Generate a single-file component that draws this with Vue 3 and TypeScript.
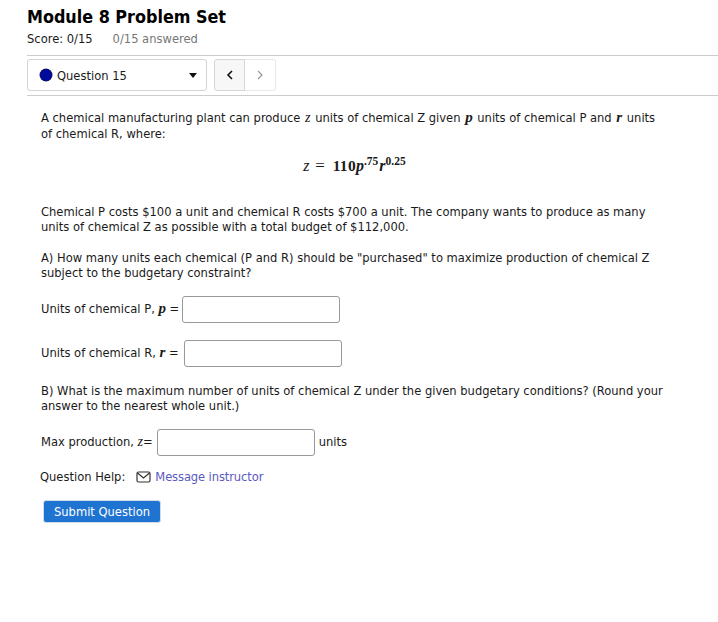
<script setup lang="ts">
const title = 'Module 8 Problem Set'
</script>

<template>
  <main class="page">
    <h1 class="title">{{ title }}</h1>
    <div class="score"><span>Score: 0/15</span><span class="answered">0/15 answered</span></div>
    <nav class="bar">
      <div class="select">
        <span class="dot"></span>
        <span class="qname">Question 15</span>
        <span class="caret"></span>
      </div>
      <div class="pager">
        <button class="pg prev" aria-label="Previous">
          <svg width="8" height="10" viewBox="0 0 8 10"><path d="M6 1 2 5l4 4" fill="none" stroke="#111" stroke-width="1.6"/></svg>
        </button>
        <button class="pg next" aria-label="Next">
          <svg width="8" height="10" viewBox="0 0 8 10"><path d="M2 1l4 4-4 4" fill="none" stroke="#999" stroke-width="1.2"/></svg>
        </button>
      </div>
    </nav>
    <section class="question">
      <p class="p1">A chemical manufacturing plant can produce <i class="mv">z</i> units of chemical Z given <i class="mb">p</i> units of chemical P and <i class="mb">r</i> units<br />of chemical R, where:</p>
      <div class="formula"><i class="mv big">z</i> <span class="eq">=</span> <b>110</b><i class="mb big">p</i><sup>.75</sup><i class="mb big">r</i><sup>0.25</sup></div>
      <p class="p2">Chemical P costs $100 a unit and chemical R costs $700 a unit. The company wants to produce as many units of chemical Z as possible with a total budget of $112,000.</p>
      <p class="p3">A) How many units each chemical (P and R) should be "purchased" to maximize production of chemical Z subject to the budgetary constraint?</p>
      <div class="field f1"><span class="lab">Units of chemical P, <i class="mb">p</i> =</span><input class="inp" type="text" /></div>
      <div class="field f2"><span class="lab">Units of chemical R, <i class="mb">r</i> =</span><input class="inp" type="text" /></div>
      <p class="p4">B) What is the maximum number of units of chemical Z under the given budgetary conditions? (Round your answer to the nearest whole unit.)</p>
      <div class="field f3"><span class="lab">Max production, <i class="mv">z</i>=</span><input class="inp" type="text" /><span class="lab">units</span></div>
    </section>
    <div class="help">
      <span>Question Help:</span>
      <svg class="mail" width="15" height="12" viewBox="0 0 15 12"><rect x="1" y="1" width="13" height="10" rx="1.5" fill="none" stroke="#333" stroke-width="1.2"/><path d="M1.5 2 7.5 7l6-5" fill="none" stroke="#333" stroke-width="1.2"/></svg>
      <a class="link">Message instructor</a>
    </div>
    <button class="submit">Submit Question</button>
  </main>
</template>

<style>
body { background: #fff; }
</style>

<style scoped>
.page { font-family: "DejaVu Sans", sans-serif; font-stretch: condensed; font-size: 12.8px; line-height: 15px; color: #1a1a1a; height: 622px; overflow: hidden; box-sizing: border-box; padding-top: 7px; }
.title { margin: 0 0 0 27px; font-size: 17.8px; line-height: 20px; font-weight: 700; color: #000; }
.score { margin: 4px 0 0 27px; display: flex; gap: 20px; font-size: 12.8px; line-height: 16px; }
.answered { color: #777; }
.bar { margin: 8px 0 0 27px; border-top: 1px solid #ccc; border-bottom: 1px solid #ccc; padding: 3px 0 4px; display: flex; gap: 7px; }
.select { width: 180px; height: 32px; box-sizing: border-box; border: 1px solid #d4d4d4; border-radius: 3px; display: flex; align-items: center; padding: 0 8px 0 12px; }
.dot { width: 12px; height: 12px; border-radius: 50%; background: #000a9c; box-shadow: 0 0 0 .5px #223; }
.qname { margin-left: 5px; flex: 1; }
.caret { width: 0; height: 0; border-left: 4px solid transparent; border-right: 4px solid transparent; border-top: 5px solid #111; margin-right: 1px; }
.pager { display: flex; }
.pg { width: 31px; height: 32px; padding: 0; background: #f7f7f7; border: 1px solid #d6d6d6; display: flex; align-items: center; justify-content: center; }
.prev { border-radius: 3px 0 0 3px; }
.next { background: #fff; border-left: 0; border-color: #e8e8e8; border-radius: 0 3px 3px 0; }
.question { margin-left: 41px; width: 625px; }
p { margin: 0; }
.p1 { margin-top: 13px; line-height: 16px; }
.p1 .mv { margin: 0 1px 0 1px; }
.p1 .mb { margin: 0 1px 0 1px; }
.p2 { margin-top: 28px; }
.p3 { margin-top: 16px; }
.p4 { margin-top: 16px; }
.formula { margin-top: 14px; height: 20px; text-align: center; font-family: "Liberation Serif", serif; font-size: 15px; line-height: 20px; padding-left: 3px; }
.formula b { font-size: 15.5px; letter-spacing: 0.3px; margin-left: 2px; }
.formula sup { font-size: 11.5px; line-height: 0; font-weight: 700; vertical-align: 6px; margin-right: 1px; }
.eq { margin: 0 2px; font-size: 17px; }
.mv { font-family: "Liberation Serif", serif; font-style: italic; font-size: 14px; }
.mb { font-family: "Liberation Serif", serif; font-style: italic; font-weight: 700; font-size: 15px; }
.big { font-size: 16px; }
.field { display: flex; align-items: center; }
.lab { padding-bottom: 2px; }
.f1 { margin-top: 16px; }
.f2 { margin-top: 17px; }
.f2 .inp { margin-left: 5px; }
.f1 .inp { margin-left: 3px; }
.f3 { margin-top: 16px; }
.inp { width: 158px; height: 27px; box-sizing: border-box; margin: 0 0 0 4px; border: 1px solid #999; border-radius: 3px; background: #fff; }
.f3 .inp { margin-right: 4px; }
.help { margin: 13px 0 0 40px; display: flex; align-items: center; }
.mail { margin: 0 4px 0 11px; }
.link { color: #5a5ac0; letter-spacing: -0.1px; }
.submit { display: block; margin: 16px 0 0 43px; width: 118px; height: 23px; padding: 0; border: 1px solid #d0dcea; border-radius: 3px; background: #1f74d1; color: #fff; font: 500 12.8px/15px "DejaVu Sans", sans-serif; font-stretch: condensed; }
</style>
